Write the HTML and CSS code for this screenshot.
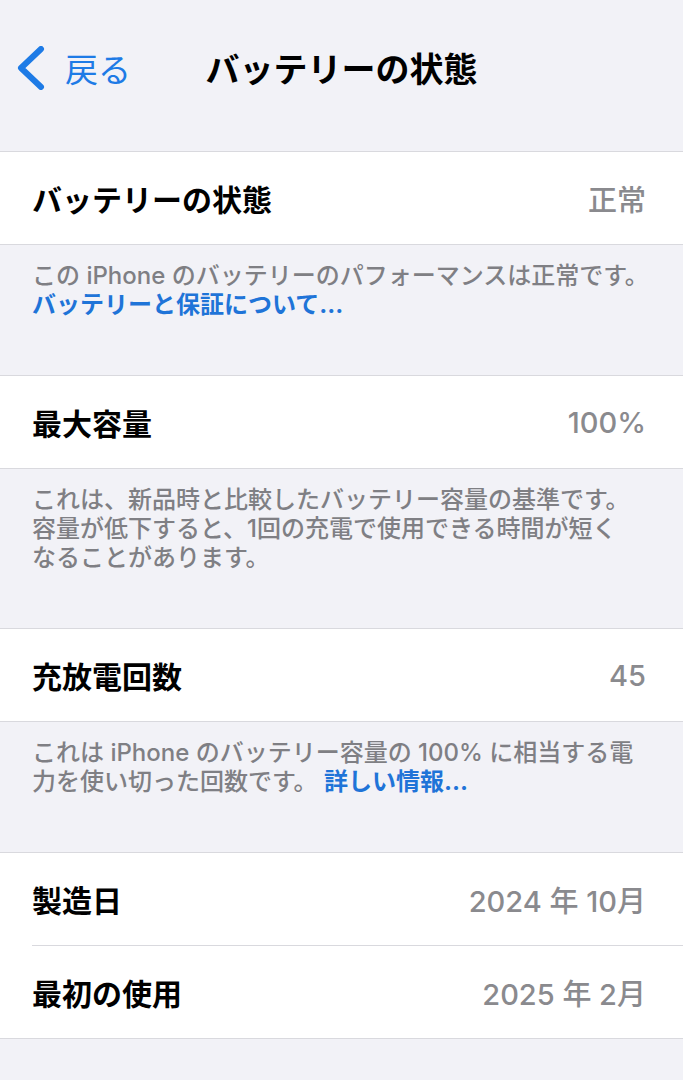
FILE: index.html
```html
<!DOCTYPE html>
<html lang="ja">
<head>
    <meta charset="UTF-8">
    <meta name="viewport" content="width=device-width, initial-scale=1.0">
    <title>バッテリーの状態</title>
    <link rel="stylesheet" href="styles.css">
</head>
<body>
    <div class="nav">
        <a href="#" class="nav-back">
            <svg class="chevron" width="30" height="44" viewBox="0 0 30 44">
                <polyline points="25,3 5,22 25,41" fill="none" stroke="currentColor" stroke-width="6" stroke-linecap="round" stroke-linejoin="round"/>
            </svg>
            <span>戻る</span>
        </a>
        <div class="nav-title">バッテリーの状態</div>
        <div></div>
    </div>

    <div class="group">
        <div class="row">
            <span class="row-label">バッテリーの状態</span>
            <span class="row-value">正常</span>
        </div>
    </div>
    <div class="footer">
        この iPhone のバッテリーのパフォーマンスは正常です。<br>
        <a href="#" class="link">バッテリーと保証について...</a>
    </div>

    <div class="group">
        <div class="row">
            <span class="row-label">最大容量</span>
            <span class="row-value">100%</span>
        </div>
    </div>
    <div class="footer">
        これは、新品時と比較したバッテリー容量の基準です。<br>
        容量が低下すると、1回の充電で使用できる時間が短く<br>
        なることがあります。
    </div>

    <div class="group">
        <div class="row">
            <span class="row-label">充放電回数</span>
            <span class="row-value">45</span>
        </div>
    </div>
    <div class="footer">
        これは iPhone のバッテリー容量の 100% に相当する電<br>
        力を使い切った回数です。 <a href="#" class="link">詳しい情報...</a>
    </div>

    <div class="group">
        <div class="row">
            <span class="row-label">製造日</span>
            <span class="row-value">2024 年 10月</span>
        </div>
        <div class="row">
            <span class="row-label">最初の使用</span>
            <span class="row-value">2025 年 2月</span>
        </div>
    </div>
</body>
</html>
```

FILE: styles.css
```css
body {
    margin: 0;
    background-color: #F2F2F7;
    font-family: Inter, "Noto Sans CJK JP", sans-serif;
    color: #000000;
}

a {
    text-decoration: none;
}

/* top navigation bar */
.nav {
    display: grid;
    grid-template-columns: 1fr auto 1fr;
    align-items: center;
    height: 46px;
    padding: 43px 16px 62px 16px;
}

.nav-back {
    display: flex;
    align-items: center;
    gap: 19px;
    color: #1E7BE6;
    font-size: 33px;
}

.chevron {
    display: block;
}

.nav-title {
    font-size: 34px;
    font-weight: 700;
}

/* grouped table cells */
.group {
    background-color: #FFFFFF;
    border-top: 1px solid #D9D9DE;
    border-bottom: 1px solid #D9D9DE;
}

.row {
    display: flex;
    justify-content: space-between;
    align-items: center;
    height: 92px;
    margin-left: 32px;
    padding-right: 37px;
}

.row + .row {
    border-top: 1px solid #D9D9DE;
}

.row-label {
    font-size: 30px;
    font-weight: 700;
}

.row-value {
    font-size: 29px;
    font-weight: 500;
    color: #8A8A8E;
}

.footer {
    padding: 16px 30px 56px 32px;
    font-size: 24px;
    font-weight: 500;
    line-height: 29px;
    color: #7F7F84;
}

.link {
    color: #1F74D8;
    font-weight: 700;
}
```
